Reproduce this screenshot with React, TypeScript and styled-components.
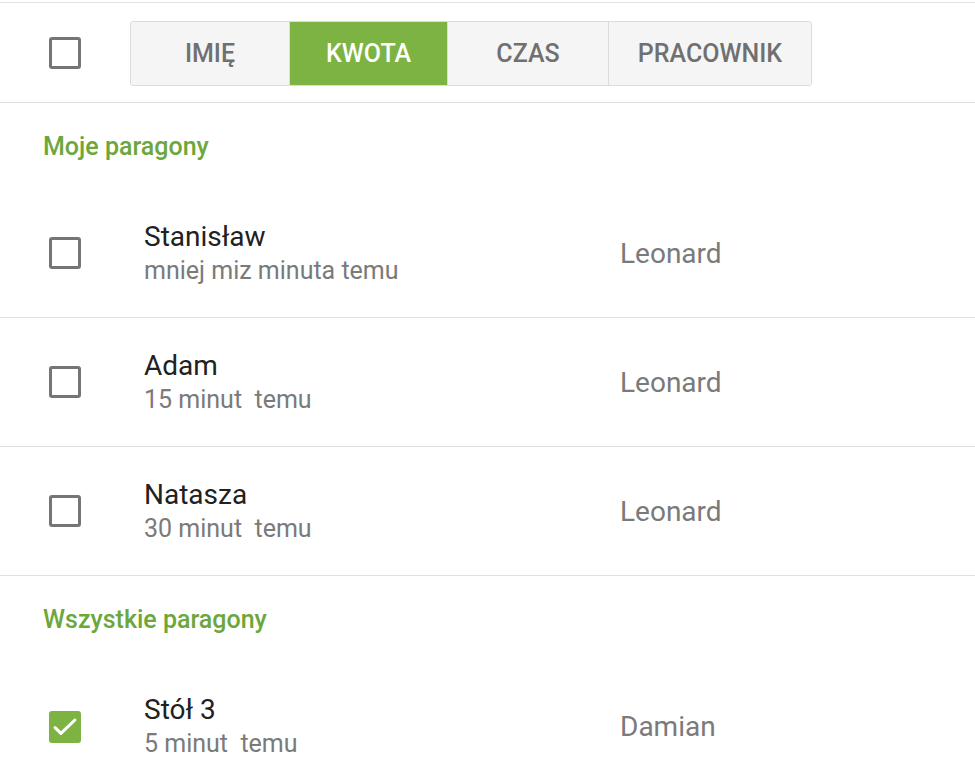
import React from "react";
import styled, { createGlobalStyle } from "styled-components";

const Global = createGlobalStyle`
  html, body { margin: 0; padding: 0; background: #ffffff; }
  body { font-family: Roboto, "Noto Sans", "Liberation Sans", sans-serif; -webkit-font-smoothing: antialiased; }
  * { box-sizing: border-box; }
`;

const Page = styled.div`
  margin-top: 2px;
  border-top: 1px solid #e3e3e3;
  width: 975px;
`;

const Header = styled.div`
  display: flex;
  align-items: center;
  height: 100px;
  padding-left: 49px;
  gap: 49px;
  border-bottom: 1px solid #e0e0e0;
`;

const Box = styled.div<{ $checked?: boolean }>`
  width: 32px;
  height: 32px;
  flex: none;
  border-radius: 3px;
  border: ${(p) => (p.$checked ? "none" : "3px solid #757575")};
  background: ${(p) => (p.$checked ? "#7cb342" : "transparent")};
  display: flex;
  align-items: center;
  justify-content: center;
`;

const Segments = styled.div`
  display: flex;
  height: 65px;
  margin-top: 1px;
  border: 1px solid #dcdcdc;
  border-radius: 3px;
  background: #f5f5f5;
  overflow: hidden;
`;

const Segment = styled.div<{ $active?: boolean; $w: number }>`
  width: ${(p) => p.$w}px;
  display: flex;
  align-items: center;
  justify-content: center;
  font-size: 25px;
  font-weight: 500;
  color: ${(p) => (p.$active ? "#ffffff" : "#707070")};
  background: ${(p) => (p.$active ? "#7cb342" : "#f5f5f5")};
  & + & { border-left: 1px solid #dcdcdc; }
`;

const SectionTitle = styled.div`
  height: 86px;
  display: flex;
  align-items: center;
  padding-left: 43px;
  font-size: 25px;
  font-weight: 500;
  color: #6ca73c;
`;

const Row = styled.div<{ $last?: boolean }>`
  height: 129px;
  display: flex;
  align-items: center;
  padding-left: 49px;
  border-bottom: ${(p) => (p.$last ? "none" : "1px solid #e0e0e0")};
`;

const TextBlock = styled.div`
  margin-left: 63px;
  width: 476px;
  display: flex;
  flex-direction: column;
  margin-top: 1px;
`;

const Name = styled.div`
  font-size: 28px;
  color: #212121;
  line-height: 34px;
`;

const Sub = styled.div`
  font-size: 25px;
  color: #7a7a7a;
  line-height: 34px;
  white-space: pre;
`;

const Worker = styled.div`
  font-size: 28px;
  color: #7a7a7a;
`;

const Check = () => (
  <svg width="28" height="28" viewBox="0 0 24 24" fill="none">
    <path d="M3.5 12.5l5 5L20.5 6" stroke="#fff" strokeWidth="2.6" strokeLinecap="round" strokeLinejoin="round" />
  </svg>
);

type Item = { name: string; sub: string; worker: string; checked?: boolean };

const mine: Item[] = [
  { name: "Stanisław", sub: "mniej miz minuta temu", worker: "Leonard" },
  { name: "Adam", sub: "15 minut  temu", worker: "Leonard" },
  { name: "Natasza", sub: "30 minut  temu", worker: "Leonard" },
];

const all: Item[] = [{ name: "Stół 3", sub: "5 minut  temu", worker: "Damian", checked: true }];

const ItemRow = ({ item, last }: { item: Item; last?: boolean }) => (
  <Row $last={last}>
    <Box $checked={item.checked}>{item.checked && <Check />}</Box>
    <TextBlock>
      <Name>{item.name}</Name>
      <Sub>{item.sub}</Sub>
    </TextBlock>
    <Worker>{item.worker}</Worker>
  </Row>
);

export default function App() {
  return (
    <>
      <Global />
      <Page>
        <Header>
          <Box />
          <Segments>
            <Segment $w={158}>IMIĘ</Segment>
            <Segment $w={158} $active>KWOTA</Segment>
            <Segment $w={161}>CZAS</Segment>
            <Segment $w={203}>PRACOWNIK</Segment>
          </Segments>
        </Header>
        <SectionTitle>Moje paragony</SectionTitle>
        {mine.map((it) => (
          <ItemRow key={it.name} item={it} />
        ))}
        <SectionTitle>Wszystkie paragony</SectionTitle>
        {all.map((it) => (
          <ItemRow key={it.name} item={it} last />
        ))}
      </Page>
    </>
  );
}
